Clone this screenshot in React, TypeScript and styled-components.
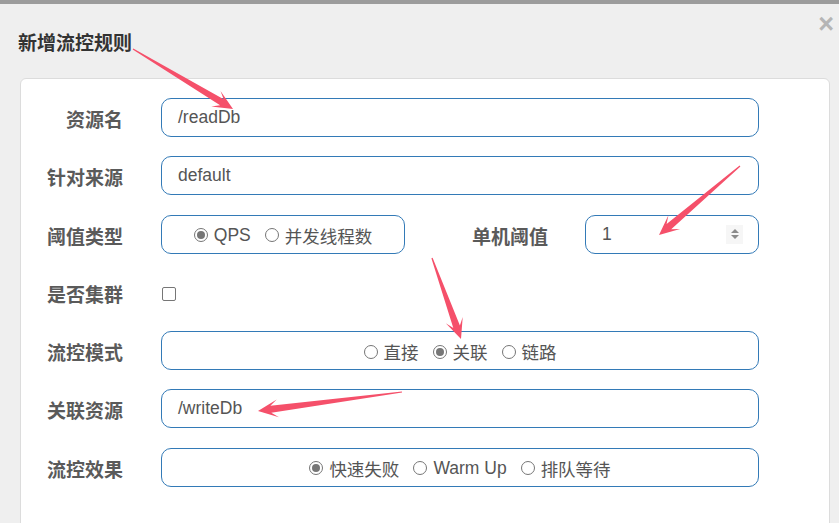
import React from "react";
import styled, { createGlobalStyle } from "styled-components";

const GlobalStyle = createGlobalStyle`
  html, body {
    margin: 0;
    padding: 0;
    background: #efefef;
    overflow: hidden;
  }
  body {
    font-family: "Liberation Sans", "Noto Sans CJK SC", sans-serif;
  }
`;

const Page = styled.div`
  position: relative;
  width: 839px;
  height: 523px;
  border-top: 4px solid #9c9c9c;
  box-sizing: border-box;
  background: #efefef;
  overflow: hidden;
`;

const Header = styled.div`
  height: 74px;
  display: flex;
  justify-content: space-between;
  padding-left: 18px;
  padding-right: 5px;
`;

const Title = styled.h4`
  margin: 0;
  align-self: center;
  font-size: 19px;
  font-weight: bold;
  color: #333;
`;

const CloseButton = styled.span`
  margin-top: 7px;
  font-size: 27px;
  line-height: 27px;
  font-weight: bold;
  color: #b5b5b5;
`;

const Panel = styled.div`
  margin-left: 20px;
  width: 810px;
  height: 480px;
  box-sizing: border-box;
  background: #fff;
  border: 1px solid #dcdcdc;
  border-radius: 6px;
  padding: 19px 70px 0 0;
  display: flex;
  flex-direction: column;
  gap: 19.3px;
`;

const Row = styled.div`
  display: grid;
  grid-template-columns: 102px 1fr;
  column-gap: 38px;
  align-items: center;
  height: 39px;
`;

const Label = styled.label`
  text-align: right;
  font-size: 19px;
  font-weight: bold;
  color: #5a5a5a;
  white-space: nowrap;
  padding-top: 2px;
`;

const Box = styled.div<{ $center?: boolean }>`
  height: 39px;
  box-sizing: border-box;
  border: 1px solid #337ab7;
  border-radius: 10px;
  display: flex;
  align-items: center;
  justify-content: ${(p) => (p.$center ? "center" : "flex-start")};
  padding: 0 16px;
  font-size: 17.5px;
  color: #555;
  background: #fff;
`;

const SplitRow = styled.div`
  display: grid;
  grid-template-columns: 244px 1fr 174px;
  column-gap: 37px;
  align-items: center;
`;

const Circle = styled.span<{ $checked?: boolean }>`
  position: relative;
  width: 14px;
  height: 14px;
  box-sizing: border-box;
  border: 1px solid #767676;
  border-radius: 50%;
  margin-right: 6px;
  flex-shrink: 0;
  &::after {
    content: "";
    display: ${(p) => (p.$checked ? "block" : "none")};
    position: absolute;
    left: 2px;
    top: 2px;
    width: 8px;
    height: 8px;
    border-radius: 50%;
    background: #767676;
  }
`;

const RadioItem = styled.span`
  display: inline-flex;
  align-items: center;
  font-size: 17.5px;
  color: #555;
  margin: 2px 7px 0;
`;

const CheckBox = styled.span`
  width: 14px;
  height: 14px;
  box-sizing: border-box;
  border: 1px solid #767676;
  border-radius: 2px;
  margin-top: 3px;
  margin-left: 1px;
`;

const Spinner = styled.span`
  margin-left: auto;
  margin-right: -1px;
  width: 17px;
  height: 19px;
  background: #f6f6f6;
  display: flex;
  align-items: center;
  justify-content: center;
`;

const Overlay = styled.svg`
  position: absolute;
  left: 0;
  top: 0;
  pointer-events: none;
`;

type Pt = [number, number];

function arrowPoints(t: Pt, p: Pt) {
  const dx = p[0] - t[0];
  const dy = p[1] - t[1];
  const len = Math.hypot(dx, dy);
  const ux = dx / len;
  const uy = dy / len;
  const nx = -uy;
  const ny = ux;
  const at = (back: number, side: number): string =>
    `${(p[0] - ux * back + nx * side).toFixed(1)},${(p[1] - uy * back + ny * side).toFixed(1)}`;
  return [
    `${(t[0] + nx * 0.6).toFixed(1)},${(t[1] + ny * 0.6).toFixed(1)}`,
    at(13, 3.5),
    at(20, 9),
    `${p[0]},${p[1]}`,
    at(20, -9),
    at(13, -3.5),
    `${(t[0] - nx * 0.6).toFixed(1)},${(t[1] - ny * 0.6).toFixed(1)}`,
  ].join(" ");
}

const arrows: [Pt, Pt][] = [
  [[133, 41], [233, 101]],
  [[740, 158], [659, 227]],
  [[432, 250], [461, 331]],
  [[402, 384], [258, 403]],
];

function Radio({ label, checked }: { label: string; checked?: boolean }) {
  return (
    <RadioItem>
      <Circle $checked={checked} />
      {label}
    </RadioItem>
  );
}

export default function App() {
  return (
    <>
      <GlobalStyle />
      <Page>
        <Header>
          <Title>新增流控规则</Title>
          <CloseButton>×</CloseButton>
        </Header>
        <Panel>
          <Row>
            <Label>资源名</Label>
            <Box>/readDb</Box>
          </Row>
          <Row>
            <Label>针对来源</Label>
            <Box>default</Box>
          </Row>
          <Row>
            <Label>阈值类型</Label>
            <SplitRow>
              <Box $center>
                <Radio label="QPS" checked />
                <Radio label="并发线程数" />
              </Box>
              <Label>单机阈值</Label>
              <Box>
                1
                <Spinner>
                  <svg width="10" height="12" viewBox="0 0 10 12">
                    <path d="M1 5 L5 1 L9 5 Z M1 7 L5 11 L9 7 Z" fill="#8a8a8a" />
                  </svg>
                </Spinner>
              </Box>
            </SplitRow>
          </Row>
          <Row>
            <Label>是否集群</Label>
            <CheckBox />
          </Row>
          <Row>
            <Label>流控模式</Label>
            <Box $center>
              <Radio label="直接" />
              <Radio label="关联" checked />
              <Radio label="链路" />
            </Box>
          </Row>
          <Row>
            <Label>关联资源</Label>
            <Box>/writeDb</Box>
          </Row>
          <Row>
            <Label>流控效果</Label>
            <Box $center>
              <Radio label="快速失败" checked />
              <Radio label="Warm Up" />
              <Radio label="排队等待" />
            </Box>
          </Row>
        </Panel>
        <Overlay width="839" height="523" viewBox="0 -4 839 523">
          {arrows.map(([t, p], i) => (
            <polygon key={i} points={arrowPoints(t, p)} fill="#f5506a" />
          ))}
        </Overlay>
      </Page>
    </>
  );
}
